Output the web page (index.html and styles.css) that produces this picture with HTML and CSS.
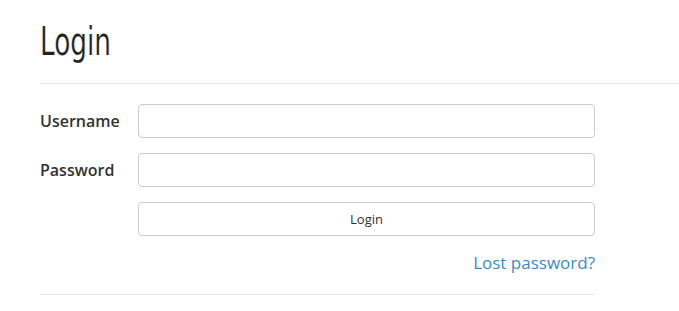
FILE: index.html
```html
<!DOCTYPE html>
<html lang="en">
<head>
    <meta charset="UTF-8">
    <meta name="viewport" content="width=device-width, initial-scale=1.0">
    <title>Login</title>
    <link rel="stylesheet" href="styles.css">
</head>
<body>

<div class="page">
    <h1 class="page-title"><span>Login</span></h1>

    <form class="login-form" onsubmit="event.preventDefault()">
        <div class="row">
            <label for="username">Username</label>
            <input type="text" id="username">
        </div>
        <div class="row">
            <label for="password">Password</label>
            <input type="password" id="password">
        </div>
        <div class="row">
            <span class="spacer"></span>
            <button type="submit">Login</button>
        </div>
        <div class="links">
            <a href="#">Lost password?</a>
        </div>
    </form>
</div>

</body>
</html>
```

FILE: styles.css
```css
body {
    font-family: "Open Sans", "Liberation Sans", sans-serif;
    color: #333;
    background: white;
    margin: 0;
    padding: 0;
}
.page {
    padding-left: 40px;
}
.page-title {
    font-family: "DejaVu Sans Condensed", "DejaVu Sans", sans-serif;
    font-weight: normal;
    font-size: 39px;
    line-height: 44px;
    margin: 0;
    padding: 20px 0 19px;
    border-bottom: 1px solid #e8e8e8;
    color: #222;
}
.page-title span {
    display: inline-block;
    transform: scaleX(0.75);
    transform-origin: left;
    -webkit-text-stroke: 0.2px white;
}
.login-form {
    width: 555px;
    padding-top: 20px;
    border-bottom: 1px solid #e8e8e8;
    padding-bottom: 20px;
}
.row {
    display: flex;
    align-items: center;
    margin-bottom: 15px;
}
.row label,
.spacer {
    width: 98px;
    flex-shrink: 0;
    font-size: 16px;
    font-weight: 600;
}
input[type="text"], input[type="password"] {
    flex: 1;
    box-sizing: border-box;
    height: 34px;
    border: 1px solid #ccc;
    border-radius: 4px;
    padding: 6px 10px;
    font-size: 14px;
}
button {
    flex: 1;
    height: 34px;
    background: white;
    border: 1px solid #ccc;
    border-radius: 4px;
    color: #333;
    font-family: "Open Sans", sans-serif;
    font-size: 13px;
    cursor: pointer;
}
.links {
    text-align: right;
    font-size: 17px;
}
.links a {
    color: #3b8bc4;
    text-decoration: none;
}
```
